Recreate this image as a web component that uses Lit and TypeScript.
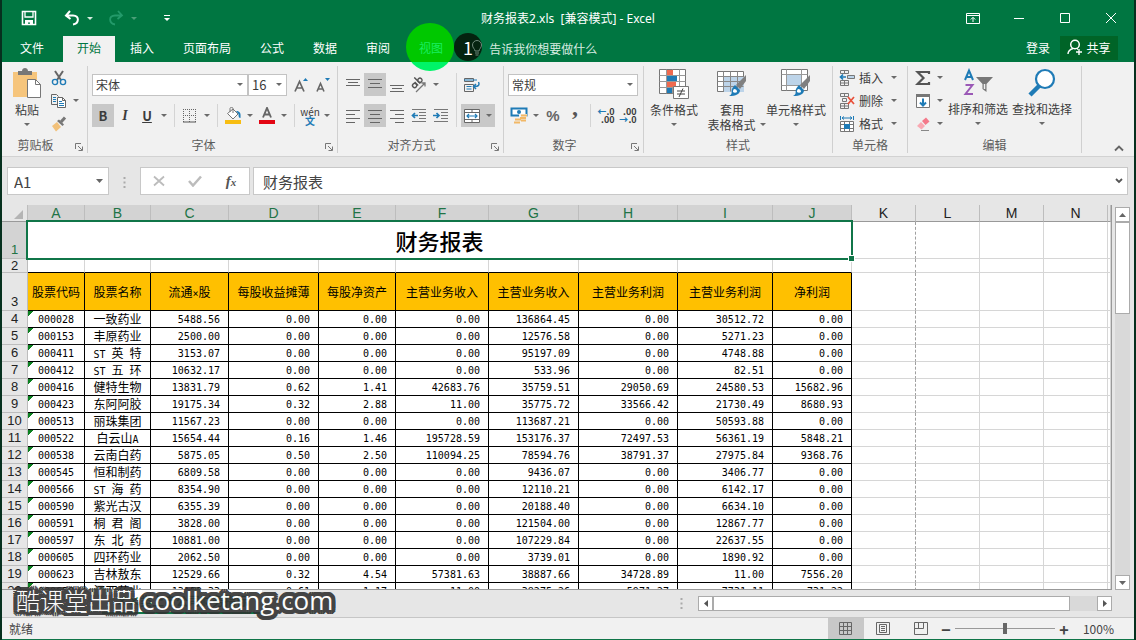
import { LitElement, html, svg, css, nothing } from "lit";
import { customElement, property } from "lit/decorators.js";
import { classMap } from "lit/directives/class-map.js";

const COLUMNS = ["A", "B", "C", "D", "E", "F", "G", "H", "I", "J", "K", "L", "M", "N"];
const HEADINGS = ["股票代码", "股票名称", "流通×股", "每股收益摊薄", "每股净资产", "主营业务收入", "主营业务收入", "主营业务利润", "主营业务利润", "净利润"];
const ROWS = `000028|一致药业|5488.56|0.00|0.00|0.00|136864.45|0.00|30512.72|0.00
000153|丰原药业|2500.00|0.00|0.00|0.00|12576.58|0.00|5271.23|0.00
000411|ST 英 特|3153.07|0.00|0.00|0.00|95197.09|0.00|4748.88|0.00
000412|ST 五 环|10632.17|0.00|0.00|0.00|533.96|0.00|82.51|0.00
000416|健特生物|13831.79|0.62|1.41|42683.76|35759.51|29050.69|24580.53|15682.96
000423|东阿阿胶|19175.34|0.32|2.88|11.00|35775.72|33566.42|21730.49|8680.93
000513|丽珠集团|11567.23|0.00|0.00|0.00|113687.21|0.00|50593.88|0.00
000522|白云山A|15654.44|0.16|1.46|195728.59|153176.37|72497.53|56361.19|5848.21
000538|云南白药|5875.05|0.50|2.50|110094.25|78594.76|38791.37|27975.84|9368.76
000545|恒和制药|6809.58|0.00|0.00|0.00|9436.07|0.00|3406.77|0.00
000566|ST 海 药|8354.90|0.00|0.00|0.00|12110.21|0.00|6142.17|0.00
000590|紫光古汉|6355.39|0.00|0.00|0.00|20188.40|0.00|6634.10|0.00
000591|桐 君 阁|3828.00|0.00|0.00|0.00|121504.00|0.00|12867.77|0.00
000597|东 北 药|10881.00|0.00|0.00|0.00|107229.84|0.00|22637.55|0.00
000605|四环药业|2062.50|0.00|0.00|0.00|3739.01|0.00|1890.92|0.00
000623|吉林敖东|12529.66|0.32|4.54|57381.63|38887.66|34728.89|11.00|7556.20
000650|江西药业|13152.33|0.61|1.17|11.00|38275.26|5971.27|7731.11|731.22`
  .split("\n")
  .map((line) => line.split("|"));

/* Latin letters, signs and blanks are set in the half-width face, ideographs in the full-width one. */
const mixed = (text: string) =>
  text.split(/([A-Za-z× ]+)/).map((part) => (/^[A-Za-z× ]+$/.test(part) ? html`<span class="num">${part}</span>` : part));

const icon = (w: number, h: number, body: unknown) =>
  html`<svg width=${w} height=${h} viewBox="0 0 ${w} ${h}" fill="none" aria-hidden="true">${body}</svg>`;

const lines = (widths: number[], align: number, gap = 4) =>
  icon(16, 16, svg`${widths.map((w, i) => {
    const x = align === 0 ? 1 : align === 1 ? 8 - w / 2 : 15 - w;
    return svg`<path d="M${x} ${2.5 + i * gap}h${w}" stroke="#666"/>`;
  })}`);

const down = html`<svg class="down" width="6" height="3" viewBox="0 0 6 3" aria-hidden="true"><path d="M0 0h6L3 3z" fill="#6a6a6a"/></svg>`;

const brush = svg`<path d="M30 7v6l-6 8-4-4z" fill="#808080"/><path d="M19 17l5 5c0 4-4 6-11 6 4-2 2-4 3-7 1-2 2-3 3-4z" fill="#1f7bb6"/><path d="M18 21c2 0 3 1 3 3-1 1-3 1-4 0 0-1 0-2 1-3z" fill="#fff"/>`;

const glyph = {
  save: icon(16, 16, svg`<path d="M1.500 1.500h13v13h-13z" stroke="#fff" stroke-width="1.600"/><path d="M4 2v5h8V2" stroke="#fff" stroke-width="1.300"/><path d="M4 15v-5h8v5H9v-2.500H7V15z" fill="#fff"/>`),
  undo: icon(16, 16, svg`<path d="M6 1L2 5.500 6.500 9M2.500 5.500H9c7 0 6 8 0 9" stroke="#fff" stroke-width="2"/>`),
  redo: icon(16, 16, svg`<path d="M10 1l4 4.500L9.500 9M13.500 5.500H7c-7 0-6 8 0 9" stroke="#239a6a" stroke-width="1.800"/>`),
  custom: icon(8, 8, svg`<path d="M1 1.500h6" stroke="#fff"/><path d="M1 4h6L4 7z" fill="#fff"/>`),
  ribbonOpt: icon(14, 11, svg`<path d="M.5.5h13v10H.5zM.5 2.500h13" stroke="#fff"/><path d="M7 9V4.500M4.800 6.500L7 4.300l2.200 2.200" stroke="#fff"/>`),
  min: icon(12, 12, svg`<path d="M1 6.500h10" stroke="#fff"/>`),
  max: icon(12, 12, svg`<path d="M1.500 1.500h9v9h-9z" stroke="#fff"/>`),
  close: icon(12, 12, svg`<path d="M1 1l10 10M11 1L1 11" stroke="#fff"/>`),
  bulb: icon(12, 16, svg`<path d="M4 11c0-2-2.500-3-2.500-6a4.500 4.500 0 019 0c0 3-2.500 4-2.500 6zM4 13h4M4.500 15h3" stroke="#6f8a7b"/>`),
  person: icon(16, 16, svg`<circle cx="8" cy="5.500" r="4.300" stroke="#fff" stroke-width="1.500"/><path d="M1 15c0-3 2-4.500 5-5.500M10 10h1M12 10v6M9 13h6" stroke="#fff" stroke-width="1.400"/>`),
  paste: icon(30, 31, svg`<path d="M1 4h24v25H1z" fill="#f6c57c"/><path d="M6 3h4c0-4 6-4 6 0h4v4H6z" fill="#777"/><path d="M15.500 11.500h8l5 5v13h-13z" fill="#fff" stroke="#777"/><path d="M23.500 11.500v5h5" stroke="#777"/>`),
  cut: icon(16, 16, svg`<path d="M4 1l6 9M12 1L6 10" stroke="#666" stroke-width="2"/><circle cx="4" cy="12" r="2.600" stroke="#1f7bb6" stroke-width="1.400"/><circle cx="12" cy="12" r="2.600" stroke="#1f7bb6" stroke-width="1.400"/>`),
  copy: icon(16, 16, svg`<path d="M6 11.500H.5v-10h5l2 2" stroke="#666"/><path d="M2 4.500h3M2 6.500h3M2 8.500h3" stroke="#1f7bb6"/><path d="M6.500 4.500h5l3 3v7h-8z" fill="#fff" stroke="#666"/><path d="M11.500 4.500v3h3" stroke="#666"/><path d="M8 8.500h3M8 10.500h5M8 12.500h5" stroke="#1f7bb6"/>`),
  painter: icon(16, 16, svg`<path d="M1 10l5-4 4 5-5 4.500z" fill="#f2c17a"/><path d="M6 5l2-1.500 5 5L11.500 10z" fill="#777"/><path d="M10 6l4-4.500" stroke="#777" stroke-width="3"/>`),
  borders: icon(14, 14, svg`<path d="M.5 0v13M6.500 0v13M12.500 0v13M0 .5h13M0 6.500h13" stroke="#666" stroke-dasharray="1 1"/><path d="M0 13h13" stroke="#555"/>`),
  fill: icon(18, 17, svg`<path d="M3.500 6.500L9 2l5 5-5 5z" fill="#fff" stroke="#777"/><path d="M6 5V1.500C6 0 9 0 9 1.500V6" stroke="#777"/><path d="M12 4c4 0 5 2 4.500 7-1.500 0-2-1-2-4z" fill="#1f7bb6"/><path d="M1 13h16v4H1z" fill="#f7bd12"/>`),
  fontColor: icon(18, 17, svg`<path d="M5 10.500L9 1l4 9.500M6.500 7.500h5" stroke="#666" stroke-width="1.900"/><path d="M1 13h16v4H1z" fill="#e30613"/>`),
  grow: icon(16, 16, svg`<path d="M2 14.500L6.500 4.500 11 14.500M4 11h5" stroke="#666" stroke-width="1.700"/><path d="M10 4h5l-2.500-3z" fill="#1f7bb6"/>`),
  shrink: icon(16, 16, svg`<path d="M2 14.500L5.500 6.500 9 14.500M3.500 12h4" stroke="#666" stroke-width="1.600"/><path d="M10 1h5l-2.500 3z" fill="#1f7bb6"/>`),
  orient: icon(18, 16, svg`<path d="M6 15L15 6M11.500 6H15v3.500" stroke="#777" stroke-width="1.300"/><g transform="translate(5 11) rotate(-45)" stroke="#555" stroke-width="1.400"><circle cx="1.500" cy="-2" r="2.100"/><path d="M4-4.500V.5M7-8V.5"/><circle cx="9" cy="-2" r="2.100"/></g>`),
  wrap: icon(18, 16, svg`<path d="M1.500 1.500h9v3h-9zM1.500 7.500h9v7h-9z" stroke="#666"/><path d="M1 3h13M3.500 9.500h5M3.500 12h5" stroke="#1f7bb6"/><path d="M15.500 5c1.500 3 0 4.500-4 4.500M13 7l-2.500 2.500L13 12" stroke="#1f7bb6" stroke-width="1.500"/>`),
  merge: icon(16, 16, svg`<path d="M.5 1.500h15v13H.5z" fill="#fff" stroke="#666"/><path d="M.5 4.500h15M.5 11.500h15M8 1.500v3M8 11.500v3" stroke="#666"/><path d="M3 8h10M5 6L3 8l2 2M11 6l2 2-2 2" stroke="#1f7bb6" stroke-width="1.200"/>`),
  outdent: icon(16, 16, svg`<path d="M1 1.500h14M8 4.500h7M8 7.500h7M8 10.500h7M1 13.500h14" stroke="#777"/><path d="M7 7.500H1.500M4 5L1.500 7.500 4 10" stroke="#1f7bb6" stroke-width="1.700"/>`),
  indent: icon(16, 16, svg`<path d="M1 1.500h14M8 4.500h7M8 7.500h7M8 10.500h7M1 13.500h14" stroke="#777"/><path d="M0 7.500h6M3.500 5L6 7.500 3.500 10" stroke="#1f7bb6" stroke-width="1.700"/>`),
  currency: icon(18, 17, svg`<path d="M1.500 1.500h15v7h-15z" fill="#fff" stroke="#1f7bb6" stroke-width="2"/><circle cx="9" cy="5" r="2" fill="#1f7bb6"/><path d="M9 7h8v9H9z" fill="#f1f1f1"/><path d="M11 8.500h6M10 11h6M11 13.500h5M5 12.500h6M4 15.500h6" stroke="#f2b866" stroke-width="1.800"/>`),
  cond: icon(32, 31, svg`<path d="M1.500 1.500h26v24h-26z" fill="#fff" stroke="#777"/><path d="M1.500 7.500h26M1.500 13.500h26M1.500 19.500h26M8.500 1.500v24M14.500 1.500v24M21.500 1.500v24" stroke="#999"/><path d="M9 2h6v5H9zM9 14h9v5H9z" fill="#ee6a50"/><path d="M9 8h10v5H9zM9 20h5v5H9z" fill="#1f7bb6"/><path d="M15.500 18.500h15v12h-15z" fill="#fff" stroke="#777"/><path d="M19 23h8M19 26h8M25 20.500L21 29" stroke="#444"/>`),
  table: icon(32, 31, svg`<path d="M1.500 3.500h26v20h-26z" fill="#fff" stroke="#777"/><path d="M8 9h20v15H8z" fill="#bdd4e9"/><path d="M1.500 8.500h26M1.500 13.500h26M1.500 18.500h26M7.500 3.500v20M14.500 3.500v20M21.500 3.500v20" stroke="#888"/>${brush}`),
  cell: icon(32, 31, svg`<path d="M1.500 1.500h26v21h-26z" fill="#fff" stroke="#777"/><path d="M1.500 6.500h26M1.500 17.500h26M6.500 1.500v21M21.500 1.500v21" stroke="#999"/><path d="M7 7h14v10H7z" fill="#bdd4e9"/>${brush}`),
  insert: icon(16, 16, svg`<path d="M1.500.5h8v3h-8zM5.500.5v3M1.500 10.500h8v5h-8zM5.500 10.500v5M1.500 13h8" stroke="#777"/><path d="M8.500 5.500h7v3h-7z" fill="#bdd4e9" stroke="#777"/><path d="M7 7H1.500M4 4.500L1.500 7 4 9.500" stroke="#1f7bb6" stroke-width="1.700"/>`),
  remove: icon(16, 16, svg`<path d="M1.500.5h8v3h-8zM5.500.5v3M1.500 10.500h8v5h-8zM5.500 10.500v5M1.500 13h8M3.500 5.500h4v3h-4z" stroke="#777"/><path d="M9 4l6 7M15 4l-6 7" stroke="#e8503a" stroke-width="1.700"/>`),
  format: icon(16, 16, svg`<path d="M1.500 0v4M14.500 0v4M3 2h10M5 .5L3 2l2 1.500M11 .5L13 2l-2 1.500" stroke="#1f7bb6"/><path d="M1.500 5.500h13v10h-13zM5.500 5.500v10M10.500 5.500v10M1.500 8.500h13M1.500 12.500h13" fill="#fff" stroke="#777"/><path d="M5 8h6v5H5z" fill="#1f7bb6"/>`),
  sum: icon(16, 16, svg`<path d="M14 4V2H2.500l6 6-6 6H14v-2" stroke="#555" stroke-width="2.200"/>`),
  fillDown: icon(16, 16, svg`<path d="M1.500 1.500h13v13h-13z" fill="#fff" stroke="#777"/><path d="M1 1h14v3H1z" fill="#777"/><path d="M8 5.500v7M5 9.500l3 3 3-3" stroke="#1f7bb6" stroke-width="2"/>`),
  erase: icon(16, 16, svg`<path d="M7 5l4-3.500 3.500 4L10.500 9z" fill="#f4798a"/><path d="M6 6l4 4-3.500 3.500L2 10z" fill="#f9a9b3"/><path d="M6 14.500h8" stroke="#888"/>`),
  sort: icon(32, 30, svg`<path d="M3 12L7 2.500 11 12M4.500 9h5" stroke="#1f7bb6" stroke-width="2"/><path d="M3.500 17h7l-7 9h7.500" stroke="#9b59b6" stroke-width="2"/><path d="M14 9h17l-6.500 7v8l-4-3v-5z" fill="#777"/><path d="M22.500 16v5" stroke="#f1f1f1" stroke-width="1.500"/>`),
  find: icon(30, 30, svg`<path d="M12 18L3 27" stroke="#1f7bb6" stroke-width="4.500"/><circle cx="18" cy="11" r="9" fill="#fff" stroke="#1f7bb6" stroke-width="2.200"/>`),
  launch: icon(8, 8, svg`<path d="M.5 6V.5H6M3 3l4 4M7.500 3.500v4h-4" stroke="#777"/>`),
  collapse: icon(10, 8, svg`<path d="M1 6.500l4-4 4 4" stroke="#666" stroke-width="1.800"/>`),
  dots: icon(3, 11, svg`<path d="M1.500 0v11" stroke="#aaa" stroke-width="2" stroke-dasharray="2 2.500"/>`),
  cancel: icon(12, 12, svg`<path d="M1 1.500l10 9M11 1.500l-10 9" stroke="#bcbcbc" stroke-width="1.800"/>`),
  accept: icon(14, 12, svg`<path d="M1 6l4 4.500L13 1.500" stroke="#bcbcbc" stroke-width="2.500"/>`),
  expand: icon(8, 6, svg`<path d="M1 1l3 3 3-3" stroke="#555" stroke-width="1.800"/>`),
  corner: icon(10, 10, svg`<path d="M9 0v9H0z" fill="#b4b4b4"/>`),
  up: icon(7, 4, svg`<path d="M0 4h7L3.500 0z" fill="#666"/>`),
  dn: icon(7, 4, svg`<path d="M0 0h7L3.500 4z" fill="#666"/>`),
  left: icon(4, 7, svg`<path d="M4 0v7L0 3.500z" fill="#555"/>`),
  right: icon(4, 7, svg`<path d="M0 0v7l4-3.500z" fill="#555"/>`),
  normal: icon(14, 13, svg`<path d="M.5.5h12v12H.5zM4.500.5v12M8.500.5v12M.5 4.500h12M.5 8.500h12" stroke="#666"/>`),
  page: icon(14, 13, svg`<path d="M.5.5h13v12H.5zM3.500 2.500h7v8h-7zM5 4.500h4M5 6.500h4M5 8.500h4" stroke="#666"/>`),
  breaks: icon(14, 13, svg`<path d="M.5.5h13v12H.5zM4.500.5v6M9.500.5v6h-9" stroke="#666"/>`),
};

const tool = (label: string, content: unknown, active = false) =>
  html`<button class=${classMap({ tool: true, active })} aria-label=${label}>${content}</button>`;
const caret = (label: string, active = false) => html`<button class=${classMap({ caret: true, active })} aria-label="${label}选项">${down}</button>`;
const sep = html`<i class="sep"></i>`;

@customElement("ribbon-group")
class RibbonGroup extends LitElement {
  @property() label = "";
  @property({ type: Boolean }) launcher = false;
  static styles = css`
    :host { display: flex; flex-direction: column; flex: none; box-sizing: border-box; border-right: 1px solid #d0d0d0; height: 87px; font-size: 12px; color: #3c3c3c; }
    .body { flex: 1; display: flex; padding-left: 4px; }
    .foot { display: flex; align-items: center; height: 16px; color: #5c5c5c; }
    .label { flex: 1; text-align: center; line-height: 16px; }
    button { display: flex; border: 0; background: none; padding: 4px 4px 0 6px; }
  `;
  render() {
    return html`<div class="body"><slot></slot></div>
      <div class="foot"><span class="label">${this.label}</span>${this.launcher ? html`<button aria-label="${this.label}设置">${glyph.launch}</button>` : nothing}</div>`;
  }
}

@customElement("excel-ribbon")
class ExcelRibbon extends LitElement {
  static styles = css`
    :host { display: flex; background: #f1f1f1; height: 95px; box-sizing: border-box; padding-top: 4px; border-bottom: 1px solid #d2d2d2; font-size: 12px; color: #3c3c3c; overflow: hidden; }
    button, select { font: inherit; color: inherit; border: 0; background: none; padding: 0; margin: 0; }
    button { display: flex; align-items: center; justify-content: center; flex: none; white-space: nowrap; }
    .tool { width: 22px; height: 23px; }
    .caret { width: 12px; height: 23px; }
    .active { background: #c8c8c8; }
    .row { display: flex; align-items: center; height: 23px; }
    .two { display: flex; flex-direction: column; gap: 8px; padding-top: 7px; }
    .three { display: flex; flex-direction: column; }
    .sep { width: 1px; height: 23px; margin: 0 4px; background: #d4d4d4; }
    .sep.tall { height: 54px; margin-top: 7px; }
    .combo { display: grid; align-items: center; border: 1px solid #c3c3c3; background: #fff; height: 20px; }
    .combo > * { grid-area: 1 / 1; }
    .combo select { appearance: none; width: 100%; height: 20px; padding-left: 3px; line-height: 18px; }
    .combo svg { justify-self: end; margin-right: 4px; pointer-events: none; }
    .face { width: 154px; }
    .size { width: 37px; margin-right: 3px; font-size: 13px; }
    .numfmt { width: 128px; }
    .big { flex-direction: column; justify-content: flex-start; padding-top: 2px; line-height: 15px; }
    .big > svg:first-child { margin-bottom: 3px; }
    .big > .down { margin-top: 6px; }
    .twoline { display: flex; align-items: center; gap: 4px; padding-left: 9px; }
    .w42 { width: 42px; } .w52 { width: 52px; } .w64 { width: 64px; }
    .named { gap: 4px; height: 23px; padding-left: 2px; justify-content: flex-start; width: 51px; }
    .clip { width: 86px; } .font { width: 250px; } .align { width: 166px; } .number { width: 140px; } .style { width: 189px; } .cells { width: 75px; } .edit { width: 174px; }
    .b { font-weight: 700; font-size: 13px; } .i { font: italic 700 14px "Liberation Serif", serif; } .u { font-weight: 700; text-decoration: underline; font-size: 13px; }
    .pct { font: 700 15px "Liberation Sans", sans-serif; color: #666; }
    .comma { font: 700 24px "Liberation Serif", serif; color: #555; line-height: 4px; padding-bottom: 18px; }
    .py { display: flex; flex-direction: column; align-items: center; line-height: 9px; font-size: 10px; }
    .py b { color: #1f7bb6; }
    .dec { display: flex; flex-direction: column; font-size: 9px; line-height: 8px; font-weight: 700; align-items: flex-end; }
    .dec b { color: #1f7bb6; }
    .fold { margin-left: auto; align-self: flex-end; width: 30px; height: 16px; }
  `;
  render() {
    return html`
      <ribbon-group class="clip" label="剪贴板" launcher>
        <button class="big w42">${glyph.paste}粘贴${down}</button>
        <div class="three">
          <div class="row">${tool("剪切", glyph.cut)}</div>
          <div class="row">${tool("复制", glyph.copy)}${caret("复制")}</div>
          <div class="row">${tool("格式刷", glyph.painter)}</div>
        </div>
      </ribbon-group>
      <ribbon-group class="font" label="字体" launcher>
        <div class="two">
          <div class="row">
            <div class="combo face"><select aria-label="字体"><option>宋体</option></select>${down}</div>
            <div class="combo size"><select aria-label="字号"><option>16</option></select>${down}</div>
            ${tool("增大字号", glyph.grow)}${tool("减小字号", glyph.shrink)}
          </div>
          <div class="row">
            ${tool("加粗", html`<span class="b">B</span>`, true)}${tool("倾斜", html`<span class="i">I</span>`)}${tool("下划线", html`<span class="u">U</span>`)}${caret("下划线")}${sep}
            ${tool("边框", glyph.borders)}${caret("边框")}${sep}
            ${tool("填充颜色", glyph.fill)}${caret("填充颜色")}${tool("字体颜色", glyph.fontColor)}${caret("字体颜色")}${sep}
            ${tool("拼音", html`<span class="py">wén<b>文</b></span>`)}${caret("拼音")}
          </div>
        </div>
      </ribbon-group>
      <ribbon-group class="align" label="对齐方式" launcher>
        <div class="two">
          <div class="row">
            ${tool("顶端对齐", lines([14, 10, 14], 1, 3))}${tool("垂直居中", lines([14, 10, 14], 1), true)}${tool("底端对齐", icon(16, 16, svg`<path d="M1 8.500h14M3 11.500h10M1 14.500h14" stroke="#666"/>`))}
            ${tool("方向", glyph.orient)}${caret("方向")}
          </div>
          <div class="row">
            ${tool("左对齐", lines([14, 9, 14, 9], 0))}${tool("居中", lines([14, 10, 14, 10], 1), true)}${tool("右对齐", lines([14, 9, 14, 9], 2))}
            ${tool("减少缩进量", glyph.outdent)}${tool("增加缩进量", glyph.indent)}
          </div>
        </div>
        <i class="sep tall"></i>
        <div class="two">
          <div class="row">${tool("自动换行", glyph.wrap)}</div>
          <div class="row">${tool("合并后居中", glyph.merge, true)}${caret("合并后居中", true)}</div>
        </div>
      </ribbon-group>
      <ribbon-group class="number" label="数字" launcher>
        <div class="two">
          <div class="row"><div class="combo numfmt"><select aria-label="数字格式"><option>常规</option></select>${down}</div></div>
          <div class="row">
            ${tool("会计数字格式", glyph.currency)}${caret("会计数字格式")}${tool("百分比样式", html`<span class="pct">%</span>`)}${tool("千位分隔样式", html`<span class="comma">,</span>`)}${sep}
            ${tool("增加小数位数", html`<span class="dec"><span><b>←</b>.0</span><span>.00</span></span>`)}${tool("减少小数位数", html`<span class="dec"><span>.00</span><span><b>→</b>.0</span></span>`)}
          </div>
        </div>
      </ribbon-group>
      <ribbon-group class="style" label="样式">
        <button class="big w52">${glyph.cond}条件格式${down}</button>
        <button class="big w64">${glyph.table}套用<span class="twoline">表格格式${down}</span></button>
        <button class="big w64">${glyph.cell}单元格样式${down}</button>
      </ribbon-group>
      <ribbon-group class="cells" label="单元格">
        <div class="three">
          <div class="row"><button class="named">${glyph.insert}插入</button>${caret("插入")}</div>
          <div class="row"><button class="named">${glyph.remove}删除</button>${caret("删除")}</div>
          <div class="row"><button class="named">${glyph.format}格式</button>${caret("格式")}</div>
        </div>
      </ribbon-group>
      <ribbon-group class="edit" label="编辑">
        <div class="three">
          <div class="row">${tool("自动求和", glyph.sum)}${caret("自动求和")}</div>
          <div class="row">${tool("填充", glyph.fillDown)}${caret("填充")}</div>
          <div class="row">${tool("清除", glyph.erase)}${caret("清除")}</div>
        </div>
        <button class="big w64">${glyph.sort}排序和筛选${down}</button>
        <button class="big w64">${glyph.find}查找和选择${down}</button>
      </ribbon-group>
      <button class="fold" aria-label="折叠功能区">${glyph.collapse}</button>`;
  }
}

@customElement("sheet-grid")
class SheetGrid extends LitElement {
  static styles = css`
    :host { display: block; overflow: hidden; background: #fff; border-right: 1px solid #999; border-bottom: 1px solid #999; font-size: 12px; color: #000; }
    table { table-layout: fixed; width: 100%; border-spacing: 0; }
    th, td { box-sizing: border-box; height: 17px; padding: 0; border: 0 solid #d6d6d6; border-width: 0 1px 1px 0; font-weight: 400; line-height: 16px; white-space: nowrap; overflow: hidden; }
    thead th { background: #e6e6e6; color: #222; border-color: #bdbdbd; border-bottom-color: #999; font: 14px/16px "Liberation Sans", sans-serif; }
    thead th.sel, tbody th.sel { background: #d3d3d3; color: #217346; }
    thead th:first-child svg { display: block; margin: 4px 3px 0 auto; }
    tbody th { background: #e6e6e6; color: #222; border-color: #bdbdbd; font: 13px/16px "Liberation Sans", sans-serif; vertical-align: bottom; }
    .first { height: 37px; } .third { height: 38px; }
    tbody .second { height: 14px; line-height: 13px; }
    .brk { border-right-style: dashed; border-right-color: #a0a0a0; }
    .title { position: relative; overflow: visible; font-size: 22px; font-weight: 500; line-height: 34px; text-align: center; }
    .title::after { content: ""; position: absolute; inset: -2px; border: 2px solid #107548; }
    .title::before { content: ""; position: absolute; right: -3px; bottom: -3px; width: 5px; height: 5px; background: #107548; outline: 1px solid #fff; z-index: 1; }
    .data { border-color: #000; }
    .under { border-bottom-color: #000; }
    .head { background: #ffc000; text-align: center; }
    .text { text-align: center; }
    .num { font-family: "DejaVu Sans Mono", monospace; font-size: 10px; line-height: 10px; }
    td.num { text-align: right; padding: 2px 8px 0 0; line-height: 14px; }
    td.code { text-align: center; padding-right: 0; background: linear-gradient(135deg, #0b8020 4px, transparent 4px); }
    .c0 { width: 26px; } .c1 { width: 57px; } .c2 { width: 66px; } .c3 { width: 78px; } .c4 { width: 90px; } .c5 { width: 77px; } .c6 { width: 93px; }
    .c7 { width: 90px; } .c8 { width: 99px; } .c9 { width: 95px; } .c10 { width: 79px; } .c11, .c12, .c13, .c14 { width: 64px; }
  `;
  private blanks(extra = "") {
    return html`<td class="brk ${extra}"></td><td class=${extra}></td><td class=${extra}></td><td class=${extra}></td><td class=${extra}></td>`;
  }
  render() {
    return html`<table>
      <colgroup>${Array.from({ length: 15 }, (_, i) => html`<col class="c${i}">`)}<col></colgroup>
      <thead><tr><th>${glyph.corner}</th>${COLUMNS.map((c, i) => html`<th class=${classMap({ sel: i < 10 })}>${c}</th>`)}<th></th></tr></thead>
      <tbody>
        <tr><th class="sel first">1</th><td class="title first" colspan="10">财务报表</td>${this.blanks()}</tr>
        <tr><th class="second">2</th>${HEADINGS.map(() => html`<td class="second under"></td>`)}${this.blanks("second")}</tr>
        <tr><th class="third">3</th>${HEADINGS.map((h) => html`<td class="data head">${mixed(h)}</td>`)}${this.blanks()}</tr>
        ${ROWS.map((row, r) => html`<tr><th>${r + 4}</th>${row.map((v, i) => i === 1
          ? html`<td class="data text">${mixed(v)}</td>`
          : html`<td class="data num ${i === 0 ? "code" : ""}">${v}</td>`)}${this.blanks()}</tr>`)}
      </tbody>
    </table>`;
  }
}

@customElement("app-root")
class AppRoot extends LitElement {
  static styles = css`
    :host { display: flex; flex-direction: column; position: relative; height: 100vh; box-sizing: border-box; overflow: hidden; border: solid #06301e; border-width: 0 2px; background: #e6e6e6; font-family: "Noto Sans CJK SC", sans-serif; font-size: 12px; color: #444; }
    button, input { font: inherit; color: inherit; border: 0; background: none; padding: 0; margin: 0; }
    button { display: flex; align-items: center; justify-content: center; }
    .top { background: #007641; color: #fff; }
    .bar { display: grid; grid-template-columns: 1fr auto 1fr; align-items: center; height: 36px; }
    .qat { display: flex; align-items: center; padding-left: 16px; }
    .qat button { width: 22px; height: 22px; }
    .qat .mini { width: 14px; }
    .qat .mini path { fill: #d6ebe0; }
    .qat .dim { opacity: .35; }
    .gap1 { margin-left: 21px; } .gap2 { margin-left: 8px; } .gap3 { margin-left: 15px; }
    .caption { white-space: pre; font-family: "Noto Sans", "Noto Sans CJK SC", sans-serif; }
    .win { display: flex; justify-content: flex-end; }
    .win button { width: 46px; height: 32px; }
    .tabs { display: flex; align-items: stretch; height: 26px; gap: 1px; }
    .tab { padding: 0 14px 3px; display: flex; align-items: center; color: #fff; text-decoration: none; }
    .file { margin: 0 4px; }
    .on { background: #f1f1f1; color: #007641; }
    .view { color: #19ee62; position: relative; z-index: 1; }
    .tell { display: flex; align-items: center; gap: 6px; margin-left: 13px; padding-bottom: 2px; color: #d7ebe0; z-index: 1; }
    .login { margin-left: auto; padding-bottom: 3px; color: #fff; }
    .share { background: #006427; height: 24px; width: 58px; gap: 3px; margin: 0 16px 0 9px; padding-bottom: 2px; }
    .halo { position: absolute; left: 404px; top: 23px; width: 48px; height: 48px; border-radius: 50%; background: linear-gradient(#00c800 39px, #00f468 39px); }
    .count { position: absolute; left: 452px; top: 33px; width: 28px; height: 28px; border-radius: 50%; background: #04230f; color: #fff; font: 18px/28px "Noto Sans CJK SC", sans-serif; text-align: center; }
    .formula { display: flex; align-items: center; height: 48px; padding: 0 6px 0 5px; font-size: 15px; }
    .box { display: flex; align-items: center; box-sizing: border-box; height: 28px; border: 1px solid #c8c8c8; background: #fff; }
    .name { width: 102px; padding: 0 5px 0 6px; }
    .name input { flex: 1; min-width: 0; }
    .name button { width: 8px; }
    .formula > .grip { margin: 0 14px; }
    .fx { width: 110px; }
    .fx button { flex: 1; height: 26px; }
    .fx i { font: italic 700 15px "Liberation Serif", serif; color: #555; }
    .fx small { font-size: 11px; }
    .entry { flex: 1; min-width: 0; margin-left: 3px; padding: 0 4px 0 9px; }
    .entry input { flex: 1; min-width: 0; }
    .sheet { flex: 1; min-height: 0; display: flex; }
    sheet-grid { flex: 1; min-width: 0; }
    .vs { display: flex; flex-direction: column; width: 15px; margin: 2px 4px 0 3px; background: #d9d9d9; }
    .vs button, .hs button { box-sizing: border-box; width: 15px; height: 15px; border: 1px solid #ababab; background: #fff; flex: none; }
    .vthumb { height: 92px; box-sizing: border-box; border: 1px solid #ababab; background: #fff; }
    .space { flex: 1; }
    .names { display: flex; align-items: center; height: 27px; border-bottom: 1px solid #c6c6c6; }
    .sheettab { align-self: flex-start; height: 24px; margin-left: 100px; padding: 0 14px; border-bottom: 2px solid #107548; background: #fff; color: #107548; font-weight: 700; line-height: 20px; }
    .names .grip { margin-left: auto; margin-right: 15px; }
    .hs { display: flex; flex: 0 1 414px; background: #d9d9d9; margin-right: 22px; }
    .hthumb { flex: 0 1 357px; box-sizing: border-box; border: 1px solid #ababab; background: #fff; }
    .status { display: flex; align-items: center; height: 21px; padding-left: 7px; background: #f1f1f1; border-bottom: 1px solid #107548; }
    .status .views { display: flex; margin-left: auto; }
    .views button { width: 38px; height: 21px; }
    .views .cur { background: #c8c8c8; width: 36px; }
    .zoom { width: 12px; height: 20px; font-size: 16px; font-weight: 700; }
    .status input { appearance: none; width: 100px; height: 12px; margin: 0 3px; background: linear-gradient(#999, #999) center / 100% 1px no-repeat; }
    .status input::-webkit-slider-thumb { appearance: none; width: 4px; height: 11px; background: #666; }
    .pct { margin: 0 20px 0 13px; }
    .mark {
      position: absolute; left: 14px; bottom: 22px; display: flex; align-items: center; gap: 6px; height: 36px; color: #fff; font-size: 24px; line-height: 36px; opacity: .9; pointer-events: none;
      text-shadow: 4px 0 #333, -4px 0 #333, 0 4px #333, 0 -4px #333, 3px 3px #333, -3px 3px #333, 3px -3px #333, -3px -3px #333,
        4px 2px #333, -4px 2px #333, 4px -2px #333, -4px -2px #333, 2px 4px #333, -2px 4px #333, 2px -4px #333, -2px -4px #333,
        2px 0 #333, -2px 0 #333, 0 2px #333, 0 -2px #333;
    }
    .mark b { font-weight: 300; }
    .mark span { font: 26px/36px "Open Sans", sans-serif; }
  `;
  render() {
    const tabs = ["插入", "页面布局", "公式", "数据", "审阅"];
    return html`
      <header class="top">
        <div class="bar">
          <div class="qat">
            <button aria-label="保存">${glyph.save}</button>
            <button class="gap1" aria-label="撤消">${glyph.undo}</button><button class="mini" aria-label="撤消列表">${down}</button>
            <button class="gap2" aria-label="恢复" disabled>${glyph.redo}</button><button class="mini dim" aria-label="恢复列表" disabled>${down}</button>
            <button class="gap3" aria-label="自定义快速访问工具栏">${glyph.custom}</button>
          </div>
          <div class="caption">财务报表2.xls  [兼容模式] - Excel</div>
          <div class="win">
            <button aria-label="功能区显示选项">${glyph.ribbonOpt}</button><button aria-label="最小化">${glyph.min}</button><button aria-label="最大化">${glyph.max}</button><button aria-label="关闭">${glyph.close}</button>
          </div>
        </div>
        <nav class="tabs">
          <a class="tab file" href="#">文件</a><a class="tab on" href="#">开始</a>
          ${tabs.map((t) => html`<a class="tab" href="#">${t}</a>`)}
          <a class="tab view" href="#">视图</a>
          <button class="tell">${glyph.bulb}告诉我你想要做什么</button>
          <button class="login">登录</button>
          <button class="share">${glyph.person}共享</button>
        </nav>
      </header>
      <excel-ribbon></excel-ribbon>
      <div class="halo"></div><div class="count">1</div>
      <div class="formula">
        <div class="box name"><input aria-label="名称框" value="A1"><button aria-label="名称列表">${glyph.dn}</button></div>
        <span class="grip">${glyph.dots}</span>
        <div class="box fx"><button aria-label="取消">${glyph.cancel}</button><button aria-label="输入">${glyph.accept}</button><button aria-label="插入函数"><i>f<small>x</small></i></button></div>
        <div class="box entry"><input aria-label="编辑栏" value="财务报表"><button aria-label="展开编辑栏">${glyph.expand}</button></div>
      </div>
      <main class="sheet">
        <sheet-grid></sheet-grid>
        <div class="vs"><button aria-label="向上滚动">${glyph.up}</button><div class="vthumb"></div><div class="space"></div><button aria-label="向下滚动">${glyph.dn}</button></div>
      </main>
      <div class="names">
        <button class="sheettab">××类上市公司财务指标</button>
        <span class="grip">${glyph.dots}</span>
        <div class="hs"><button aria-label="向左滚动">${glyph.left}</button><div class="hthumb"></div><div class="space"></div><button aria-label="向右滚动">${glyph.right}</button></div>
      </div>
      <footer class="status">
        <span>就绪</span>
        <div class="views"><button class="cur" aria-label="普通">${glyph.normal}</button><button aria-label="页面布局视图">${glyph.page}</button><button aria-label="分页预览">${glyph.breaks}</button></div>
        <button class="zoom" aria-label="缩小">−</button>
        <input type="range" aria-label="缩放级别" min="0" max="200" value="100">
        <button class="zoom" aria-label="放大">+</button>
        <span class="pct">100%</span>
      </footer>
      <div class="mark"><b>酷课堂出品</b><span>coolketang.com</span></div>`;
  }
}
